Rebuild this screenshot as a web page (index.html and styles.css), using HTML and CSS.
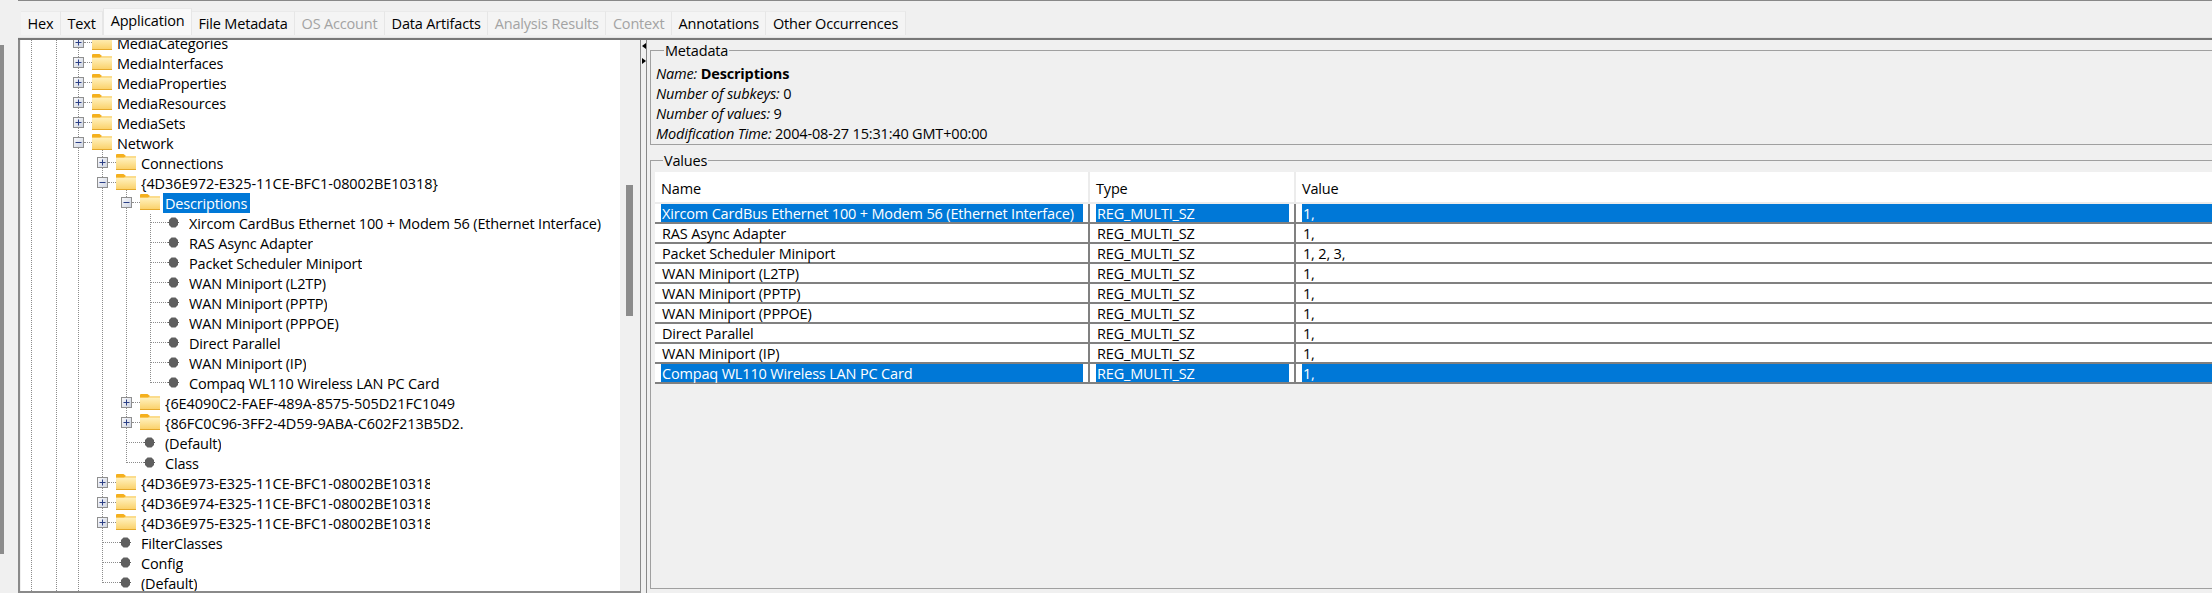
FILE: index.html
```html
<!DOCTYPE html>
<html lang="en">
<head>
  <meta charset="UTF-8">
  <title>Registry Viewer</title>
  <link rel="stylesheet" href="styles.css">
</head>
<body>

  <svg class="sprites" width="0" height="0">
    <defs>
      <linearGradient id="folder-fill" x1="0" y1="0" x2="0" y2="1">
        <stop offset="0" stop-color="#fff1bd"/>
        <stop offset="1" stop-color="#fbd26c"/>
      </linearGradient>
      <linearGradient id="box-fill" x1="0" y1="0" x2="1" y2="1">
        <stop offset="0" stop-color="#fbfbfd"/>
        <stop offset="1" stop-color="#cdd3e0"/>
      </linearGradient>
    </defs>
    <symbol id="folder" viewBox="0 0 20 16">
      <path d="M0 1 Q0 0 1 0 H7.5 L10 2 H20 V16 H0 Z" fill="#f4b01e"/>
      <path d="M10 2 H20 V4 H0 V3.5 H8 Z" fill="#fbdc8c"/>
      <path d="M0 4 H20 V15 H0 Z" fill="url(#folder-fill)"/>
      <path d="M0 15 H20 V16 H0 Z" fill="#e5a92c"/>
    </symbol>
    <symbol id="plus" viewBox="0 0 11 11">
      <rect x="0.5" y="0.5" width="10" height="10" fill="url(#box-fill)" stroke="#8f8f8f"/>
      <path d="M2.5 5.5 H8.5 M5.5 2.5 V8.5" stroke="#2b3f86" stroke-width="1"/>
    </symbol>
    <symbol id="minus" viewBox="0 0 11 11">
      <rect x="0.5" y="0.5" width="10" height="10" fill="url(#box-fill)" stroke="#8f8f8f"/>
      <path d="M2.5 5.5 H8.5" stroke="#2b3f86" stroke-width="1"/>
    </symbol>
    <symbol id="dot" viewBox="0 0 11 11">
      <path d="M3.5 0.5 H7.5 L10 3 V8 L7.5 10.5 H3.5 L1 8 V3 Z" fill="#5f5f5f"/>
      <path d="M0 5 H11 V6 H0 Z" fill="#5f5f5f"/>
    </symbol>
  </svg>

  <div class="rail"></div>

  <div class="main">
    <nav class="tabs">
      <a class="tab">Hex</a>
      <a class="tab">Text</a>
      <a class="tab active">Application</a>
      <a class="tab">File Metadata</a>
      <a class="tab off">OS Account</a>
      <a class="tab">Data Artifacts</a>
      <a class="tab off">Analysis Results</a>
      <a class="tab off">Context</a>
      <a class="tab">Annotations</a>
      <a class="tab">Other Occurrences</a>
    </nav>

    <div class="panes">
      <div class="tree">
        <i class="guide g-a"></i>
        <i class="guide g-b"></i>
        <i class="guide g-c"></i>
        <i class="guide g-d"></i>
        <i class="guide g-e"></i>
        <i class="guide g-f"></i>

        <ul class="nodes">
          <li class="node d0"><svg class="box"><use href="#plus"/></svg><i class="link"></i><svg class="folder"><use href="#folder"/></svg><span class="label">MediaCategories</span></li>
          <li class="node d0"><svg class="box"><use href="#plus"/></svg><i class="link"></i><svg class="folder"><use href="#folder"/></svg><span class="label">MediaInterfaces</span></li>
          <li class="node d0"><svg class="box"><use href="#plus"/></svg><i class="link"></i><svg class="folder"><use href="#folder"/></svg><span class="label">MediaProperties</span></li>
          <li class="node d0"><svg class="box"><use href="#plus"/></svg><i class="link"></i><svg class="folder"><use href="#folder"/></svg><span class="label">MediaResources</span></li>
          <li class="node d0"><svg class="box"><use href="#plus"/></svg><i class="link"></i><svg class="folder"><use href="#folder"/></svg><span class="label">MediaSets</span></li>
          <li class="node d0"><svg class="box"><use href="#minus"/></svg><i class="link"></i><svg class="folder"><use href="#folder"/></svg><span class="label">Network</span></li>
          <li class="node d1"><svg class="box"><use href="#plus"/></svg><i class="link"></i><svg class="folder"><use href="#folder"/></svg><span class="label">Connections</span></li>
          <li class="node d1"><svg class="box"><use href="#minus"/></svg><i class="link"></i><svg class="folder"><use href="#folder"/></svg><span class="label guid">{4D36E972-E325-11CE-BFC1-08002BE10318}</span></li>
          <li class="node d2"><svg class="box"><use href="#minus"/></svg><i class="link"></i><svg class="folder"><use href="#folder"/></svg><span class="label picked">Descriptions</span></li>
          <li class="node d3"><i class="hook"></i><svg class="dot"><use href="#dot"/></svg><span class="label">Xircom CardBus Ethernet 100 + Modem 56 (Ethernet Interface)</span></li>
          <li class="node d3"><i class="hook"></i><svg class="dot"><use href="#dot"/></svg><span class="label">RAS Async Adapter</span></li>
          <li class="node d3"><i class="hook"></i><svg class="dot"><use href="#dot"/></svg><span class="label">Packet Scheduler Miniport</span></li>
          <li class="node d3"><i class="hook"></i><svg class="dot"><use href="#dot"/></svg><span class="label">WAN Miniport (L2TP)</span></li>
          <li class="node d3"><i class="hook"></i><svg class="dot"><use href="#dot"/></svg><span class="label">WAN Miniport (PPTP)</span></li>
          <li class="node d3"><i class="hook"></i><svg class="dot"><use href="#dot"/></svg><span class="label">WAN Miniport (PPPOE)</span></li>
          <li class="node d3"><i class="hook"></i><svg class="dot"><use href="#dot"/></svg><span class="label">Direct Parallel</span></li>
          <li class="node d3"><i class="hook"></i><svg class="dot"><use href="#dot"/></svg><span class="label">WAN Miniport (IP)</span></li>
          <li class="node d3"><i class="hook"></i><svg class="dot"><use href="#dot"/></svg><span class="label">Compaq WL110 Wireless LAN PC Card</span></li>
          <li class="node d2"><svg class="box"><use href="#plus"/></svg><i class="link"></i><svg class="folder"><use href="#folder"/></svg><span class="label guid">{6E4090C2-FAEF-489A-8575-505D21FC1049</span></li>
          <li class="node d2"><svg class="box"><use href="#plus"/></svg><i class="link"></i><svg class="folder"><use href="#folder"/></svg><span class="label guid">{86FC0C96-3FF2-4D59-9ABA-C602F213B5D2.</span></li>
          <li class="node d2"><i class="hook"></i><svg class="dot"><use href="#dot"/></svg><span class="label">(Default)</span></li>
          <li class="node d2"><i class="hook"></i><svg class="dot"><use href="#dot"/></svg><span class="label">Class</span></li>
          <li class="node d1"><svg class="box"><use href="#plus"/></svg><i class="link"></i><svg class="folder"><use href="#folder"/></svg><span class="label guid cut">{4D36E973-E325-11CE-BFC1-08002BE10318}</span></li>
          <li class="node d1"><svg class="box"><use href="#plus"/></svg><i class="link"></i><svg class="folder"><use href="#folder"/></svg><span class="label guid cut">{4D36E974-E325-11CE-BFC1-08002BE10318}</span></li>
          <li class="node d1"><svg class="box"><use href="#plus"/></svg><i class="link"></i><svg class="folder"><use href="#folder"/></svg><span class="label guid cut">{4D36E975-E325-11CE-BFC1-08002BE10318}</span></li>
          <li class="node d1"><i class="hook"></i><svg class="dot"><use href="#dot"/></svg><span class="label">FilterClasses</span></li>
          <li class="node d1"><i class="hook"></i><svg class="dot"><use href="#dot"/></svg><span class="label">Config</span></li>
          <li class="node d1"><i class="hook"></i><svg class="dot"><use href="#dot"/></svg><span class="label">(Default)</span></li>
        </ul>
      </div>

      <div class="scrollbar"><div class="thumb"></div></div>

      <div class="splitter">
        <i class="arrow left"></i>
        <i class="arrow right"></i>
      </div>

      <div class="details">
        <fieldset class="group meta">
          <legend>Metadata</legend>
          <p><em>Name:</em> <strong>Descriptions</strong></p>
          <p><em>Number of subkeys:</em> 0</p>
          <p><em>Number of values:</em> 9</p>
          <p><em>Modification Time:</em> 2004-08-27 15:31:40 GMT+00:00</p>
        </fieldset>

        <fieldset class="group values">
          <legend>Values</legend>
          <table>
            <thead>
              <tr><th class="c-name">Name</th><th class="c-type">Type</th><th class="c-value">Value</th></tr>
            </thead>
            <tbody>
              <tr class="sel"><td><div>Xircom CardBus Ethernet 100 + Modem 56 (Ethernet Interface)</div></td><td><div>REG_MULTI_SZ</div></td><td><div>1,</div></td></tr>
              <tr><td><div>RAS Async Adapter</div></td><td><div>REG_MULTI_SZ</div></td><td><div>1,</div></td></tr>
              <tr><td><div>Packet Scheduler Miniport</div></td><td><div>REG_MULTI_SZ</div></td><td><div>1, 2, 3,</div></td></tr>
              <tr><td><div>WAN Miniport (L2TP)</div></td><td><div>REG_MULTI_SZ</div></td><td><div>1,</div></td></tr>
              <tr><td><div>WAN Miniport (PPTP)</div></td><td><div>REG_MULTI_SZ</div></td><td><div>1,</div></td></tr>
              <tr><td><div>WAN Miniport (PPPOE)</div></td><td><div>REG_MULTI_SZ</div></td><td><div>1,</div></td></tr>
              <tr><td><div>Direct Parallel</div></td><td><div>REG_MULTI_SZ</div></td><td><div>1,</div></td></tr>
              <tr><td><div>WAN Miniport (IP)</div></td><td><div>REG_MULTI_SZ</div></td><td><div>1,</div></td></tr>
              <tr class="sel"><td><div>Compaq WL110 Wireless LAN PC Card</div></td><td><div>REG_MULTI_SZ</div></td><td><div>1,</div></td></tr>
            </tbody>
          </table>
        </fieldset>
      </div>
    </div>
  </div>

</body>
</html>
```

FILE: styles.css
```css
* {
  box-sizing: border-box;
}
html, body {
  height: 100%;
}
body {
  font-family: "Open Sans", sans-serif;
  font-size: 14.5px;
  letter-spacing: -0.17px;
  background-color: #f0f0f0;
  color: #000;
  margin: 0;
  display: flex;
  overflow: hidden;
}
.sprites {
  position: absolute;
}
.rail {
  flex: none;
  width: 4px;
  height: 509px;
  margin: 45px 14px 0 0;
  background-color: #8c8c8c;
}
.main {
  flex: 1;
  min-width: 0;
  display: flex;
  flex-direction: column;
  box-shadow: 0 -1px 0 0 #888;
  border-top: 1px solid #888;
}

/* tabs */
.tabs {
  height: 37px;
  padding: 0 0 2px 3px;
  display: flex;
  align-items: flex-end;
  border-bottom: 1px solid #e4e4e4;
}
.tab {
  height: 24px;
  line-height: 23px;
  padding: 0 6.5px;
  background-color: #f4f4f4;
  border-right: 1px solid #e6e6e6;
  border-top: 1px solid #eaeaea;
  white-space: nowrap;
}
.tab.active {
  height: 27px;
  line-height: 24px;
  background-color: #f9f9f9;
  border-left: 1px solid #e6e6e6;
}
.tab.off {
  color: #a3a3a3;
}

/* panes */
.panes {
  flex: 1;
  min-height: 0;
  display: flex;
  border-top: 2px solid #777;
}
.tree {
  position: relative;
  width: 602px;
  flex: none;
  background-color: #fff;
  border-left: 2px solid #8a8a8a;
  border-bottom: 2px solid #8a8a8a;
  box-shadow: inset 1px 0 0 #f0f0f0;
  overflow: hidden;
}
.scrollbar {
  width: 21px;
  flex: none;
  padding: 145px 7px 0 6px;
  border-right: 1px solid #8a8a8a;
  border-bottom: 2px solid #8a8a8a;
}
.thumb {
  height: 131px;
  background-color: #8c8c8c;
}
.splitter {
  width: 5px;
  flex: none;
  padding-top: 3px;
  display: flex;
  flex-direction: column;
  gap: 9px;
  align-items: flex-end;
}
.arrow {
  display: block;
  width: 0;
  height: 0;
  border-style: solid;
  border-width: 3px 0 3px 4px;
  border-color: transparent transparent transparent #000;
}
.arrow.left {
  border-width: 3px 4px 3px 0;
  border-color: transparent #000 transparent transparent;
}

/* tree */
.guide {
  position: absolute;
  top: 0;
  border-left: 1px dotted #8c8c8c;
}
.g-a { left: 11px; height: 100%; }
.g-b { left: 36px; height: 100%; }
.g-c { left: 58px; height: 100%; }
.g-d { left: 82px; top: 104px; height: 439px; }
.g-e { left: 106px; top: 144px; height: 279px; }
.g-f { left: 130px; top: 174px; height: 169px; }

.nodes {
  position: relative;
  list-style: none;
  margin: -7px 0 0 0;
  padding: 0;
}
.node {
  height: 20px;
  display: flex;
  align-items: center;
  white-space: nowrap;
}
.d0 { padding-left: 53px; }
.d1 { padding-left: 77px; }
.d2 { padding-left: 101px; }
.d3 { padding-left: 125px; }

.box {
  width: 11px;
  height: 11px;
  flex: none;
  margin-top: -2px;
}
.link {
  width: 8px;
  flex: none;
  margin-top: -2px;
  border-top: 1px dotted #8c8c8c;
}
.folder {
  width: 20px;
  height: 16px;
  flex: none;
  margin: -2px 5px 0 0;
}
.hook {
  width: 18px;
  margin: -2px 0 0 5px;
  flex: none;
  border-top: 1px dotted #8c8c8c;
}
.dot {
  width: 11px;
  height: 11px;
  flex: none;
  margin: -1px 10px 0 0;
}
.label {
  display: block;
  height: 20px;
  overflow: hidden;
  line-height: 22px;
}
.guid {
  letter-spacing: -0.06px;
}
.cut {
  width: 289px;
}
.picked {
  background-color: #0078d7;
  color: #fff;
  margin-left: -2px;
  padding: 0 3px 0 2px;
}

/* right side */
.details {
  flex: 1;
  min-width: 0;
  display: flex;
  flex-direction: column;
  padding-left: 3px;
  border-left: 1px solid #888;
}
.group {
  margin: 0;
  padding: 0;
  min-width: 0;
  border: 1px solid #a0a0a0;
  border-right: 0;
}
.group legend {
  height: 20px;
  margin-left: 8px;
  padding: 0 1px;
  line-height: 22px;
}
.meta {
  padding: 4px 0 0 5px;
  height: 105px;
}
.meta p {
  margin: 0;
  line-height: 20px;
}
.values {
  flex: 1;
  min-height: 0;
  margin: 5px 0 4px 0;
  padding: 2px 0 0 4px;
}
table {
  width: 100%;
  table-layout: fixed;
  border-collapse: separate;
  border-spacing: 0;
}
th {
  height: 32px;
  padding: 2px 0 0 6px;
  text-align: left;
  font-weight: normal;
  background-color: #fff;
  border-right: 2px solid #ececec;
  border-bottom: 2px solid #ececec;
}
.c-name { width: 435px; }
.c-type { width: 206px; }
.c-value { border-right: 0; }
td {
  padding: 0 5px 0 6px;
  background-color: #fff;
  border-right: 2px solid #808080;
  border-bottom: 2px solid #808080;
}
td:last-child {
  padding-right: 0;
  border-right: 0;
}
td div {
  height: 18px;
  line-height: 20px;
  padding-left: 1px;
  white-space: nowrap;
}
.sel div {
  background-color: #0078d7;
  color: #fff;
}
```
